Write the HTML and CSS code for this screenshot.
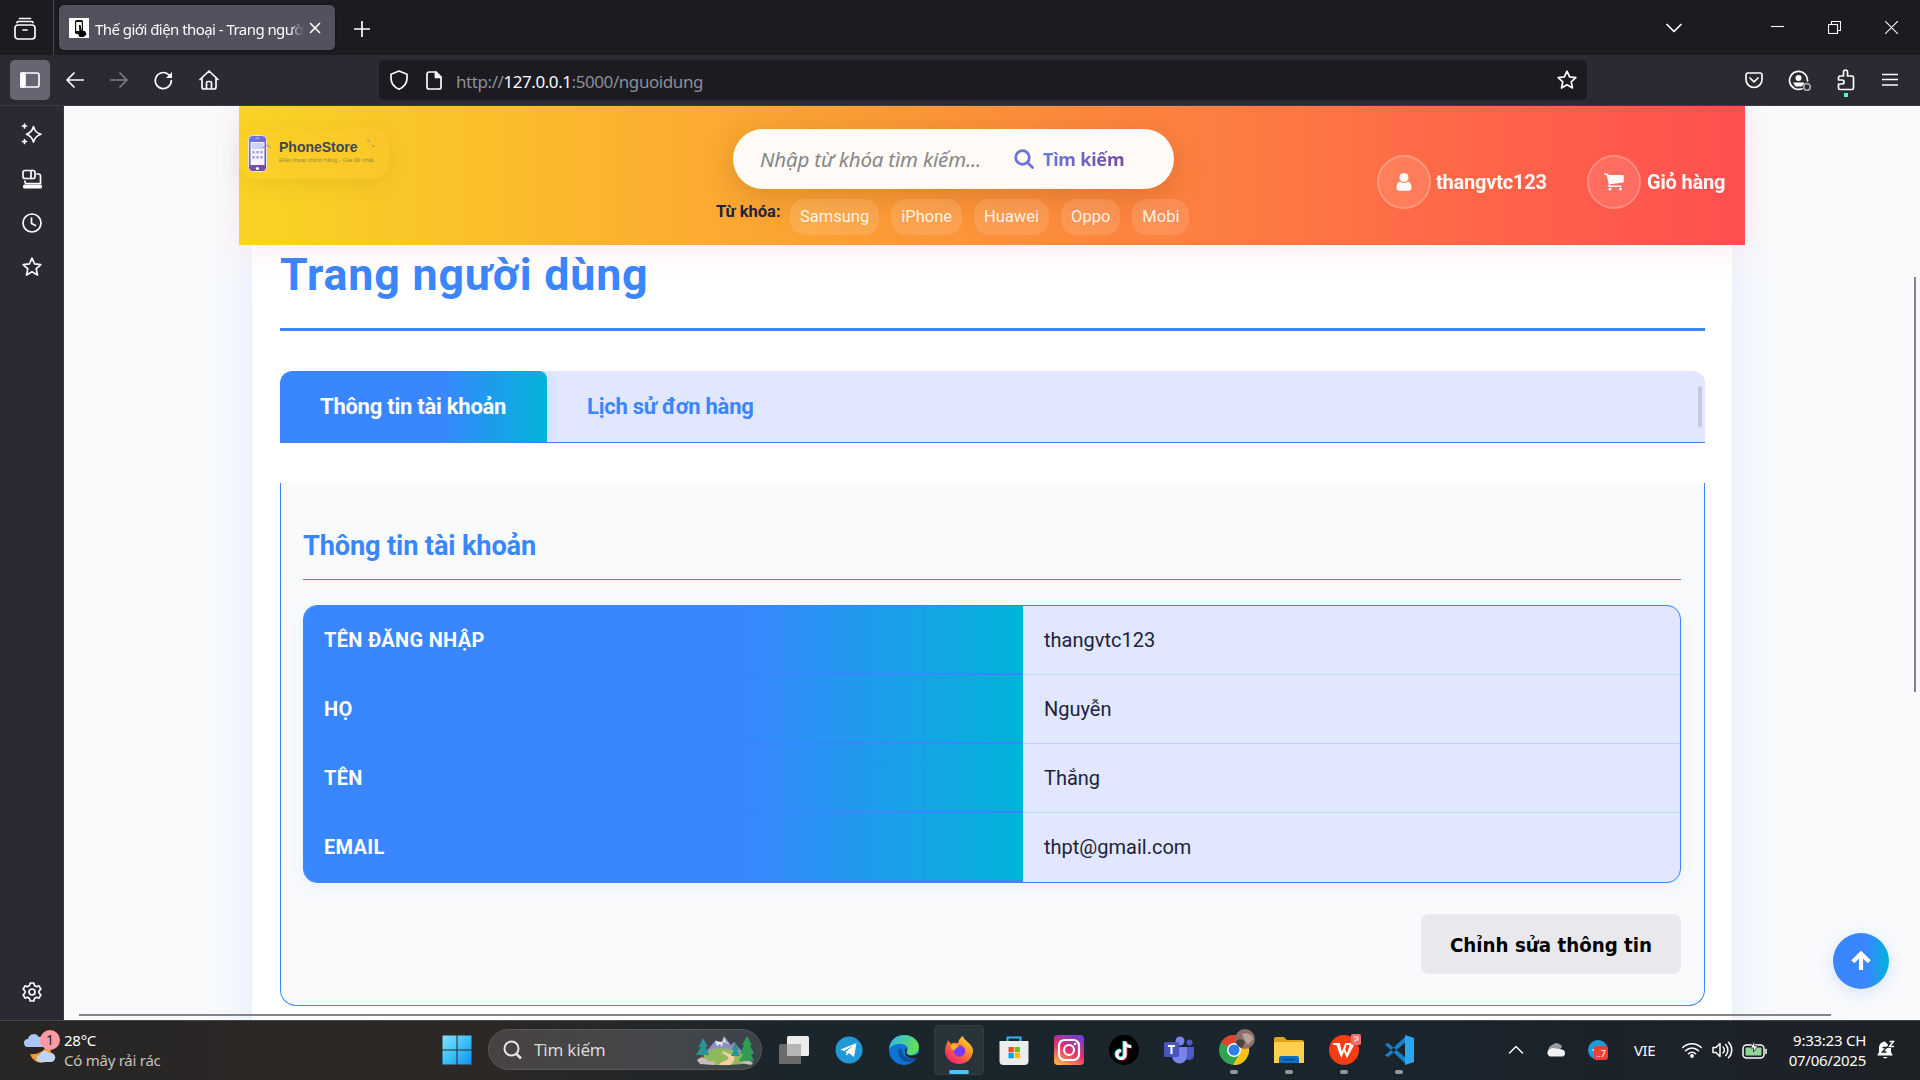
FILE: index.html
```html
<!DOCTYPE html>
<html lang="vi">
<head>
<meta charset="utf-8">
<title>Thế giới điện thoại - Trang người dùng</title>
<link rel="stylesheet" href="styles.css">
</head>
<body>
<div class="tabstrip">
  <div class="tab-overview"><svg class="ico" width="24" height="24" viewBox="0 0 24 24"><path d="M6.500 1.500h11M4 5.500a3 3 0 0 1 1-1h14a3 3 0 0 1 1 1"/><rect x="2" y="8" width="20" height="14" rx="3"/><path d="M10 13h4"/></svg></div>
  <div class="browser-tab">
    <svg width="20" height="20" viewBox="0 0 20 20"><rect width="20" height="20" fill="#fff"/><rect x="6" y="2" width="8" height="14" rx="1.500" fill="#111"/><rect x="7.200" y="4" width="5.600" height="9" fill="#fff"/><path d="M10 7l1.500 0 1 5 4 1.500 1 3-3 2.500h-4l-2-4 2 .5z" fill="#000"/></svg>
    <span class="tab-title">Thế giới điện thoại - Trang ngườ</span>
    <svg class="ico" width="12" height="12" viewBox="0 0 12 12"><path d="M1.500 1.500l9 9M10.500 1.500l-9 9"/></svg>
  </div>
  <svg class="ico new-tab" width="16" height="16" viewBox="0 0 16 16"><path d="M8 .5v15M.5 8h15"/></svg>
  <div class="window-controls">
    <svg class="ico" width="16" height="10" viewBox="0 0 16 10"><path d="M1 1.500l7 7 7-7"/></svg>
    <svg class="ico thin" width="13" height="12" viewBox="0 0 13 12"><path d="M0 4.500h13"/></svg>
    <svg class="ico thin" width="13" height="13" viewBox="0 0 13 13"><rect x=".5" y="3.500" width="9" height="9"/><path d="M3.500 3.500v-3h9v9h-3"/></svg>
    <svg class="ico thin" width="13" height="13" viewBox="0 0 13 13"><path d="M0 0l13 13M13 0L0 13"/></svg>
  </div>
</div>

<div class="toolbar">
  <div class="sidebar-toggle"><svg class="ico" width="20" height="16" viewBox="0 0 20 16"><rect x="1" y="1" width="18" height="14" rx="2"/><rect x="1" y="1" width="4" height="14" fill="#fbfbfe"/></svg></div>
  <div class="nav-buttons">
    <svg class="ico" width="18" height="16" viewBox="0 0 18 16"><path d="M17.500 8H1.500M8 1L1 8l7 7"/></svg>
    <svg class="ico dim" width="18" height="16" viewBox="0 0 18 16"><path d="M.5 8h16M10 1l7 7-7 7"/></svg>
    <svg class="ico" width="19" height="19" viewBox="0 0 19 19"><path d="M17.300 9.500a8 8 0 1 1-3-6.200l2.500 2.500"/><path d="M18 1v6h-6z" fill="#fbfbfe" stroke="none"/></svg>
    <svg class="ico" width="20" height="20" viewBox="0 0 20 20"><path d="M1 9.500L10 1l9 8.500M3 8v9a2 2 0 0 0 2 2h10a2 2 0 0 0 2-2V8M7.500 19v-6a1.500 1.500 0 0 1 1.500-1.500h2a1.500 1.500 0 0 1 1.500 1.500v6"/></svg>
  </div>
  <div class="address">
    <svg class="ico" width="20" height="20" viewBox="0 0 20 20"><path d="M10 1l8 3.300v4c0 5-3.500 9-8 10.900C5.500 17.300 2 13.300 2 8.300v-4z"/></svg>
    <svg class="ico" width="16" height="19" viewBox="0 0 16 19"><path d="M3 1h7l5 5v10a2 2 0 0 1-2 2H3a2 2 0 0 1-2-2V3a2 2 0 0 1 2-2z"/><path d="M9.500 1v5.500H15z" fill="#fbfbfe"/></svg>
    <span class="url">http://<b>127.0.0.1</b>:5000/nguoidung</span>
    <svg class="ico" width="20" height="20" viewBox="0 0 20 20"><path d="M10 1.200l2.600 5.700 6.200.7-4.600 4.200 1.300 6.200-5.500-3.200L4.500 18l1.300-6.200L1.200 7.600l6.200-.7z"/></svg>
  </div>
  <div class="toolbar-end">
    <svg class="ico" width="18" height="17" viewBox="0 0 18 17"><path d="M3 1h12a2 2 0 0 1 2 2v4.500a8 8 0 0 1-16 0V3a2 2 0 0 1 2-2zM5 6l4 3.800L13 6"/></svg>
    <svg class="ico" width="24" height="21" viewBox="0 0 24 21"><path d="M14 18.700A9 9 0 1 1 19.500 11" /><circle cx="10.500" cy="8" r="3" fill="#fbfbfe" stroke="none"/><path d="M5 12.500h11v1.500l-2.500 2.500h-6z" fill="#fbfbfe" stroke="none"/><circle cx="19" cy="17" r="3.300" stroke="#aaa9b0"/></svg>
    <svg class="ico" width="18" height="28" viewBox="0 0 18 28"><path d="M1.500 8.500a1.500 1.500 0 0 1 1.500-1.500h3.500V3a2 2 0 0 1 4 0v4H15a1.500 1.500 0 0 1 1.500 1.500V19a1.500 1.500 0 0 1-1.500 1.500H3A1.500 1.500 0 0 1 1.500 19v-4H5a2 2 0 0 0 0-4H1.500z"/><rect x="7" y="24" width="4" height="4" fill="#54ffbd" stroke="none"/></svg>
    <svg class="ico" width="16" height="14" viewBox="0 0 16 14"><path d="M.5 1.500h15M.5 6.500h15M.5 12h15"/></svg>
  </div>
</div>

<div class="middle">
  <div class="side">
    <svg class="ico" width="22" height="22" viewBox="0 0 22 22"><path d="M12.500 3.500c1.200 4.500 2.800 6.200 7.500 7.800-4.700 1.600-6.300 3.300-7.500 7.700-1.200-4.400-2.800-6.100-7-7.700 4.200-1.600 5.800-3.300 7-7.800zM3.500 1v4M1.500 3h4M3.500 16.500v4M1.500 18.500h4"/></svg>
    <svg class="ico" width="22" height="20" viewBox="0 0 22 20"><rect x="2" y="1.500" width="12" height="8" rx="2"/><path d="M10 2v7.500M16 5h1.500a2 2 0 0 1 2 2v7.500h-14a1.500 1.500 0 0 1-1.500-1.500v-1"/><rect x="2" y="15.500" width="19" height="4" rx="1.500" fill="#fbfbfe" stroke="none"/></svg>
    <svg class="ico" width="20" height="20" viewBox="0 0 20 20"><circle cx="10" cy="10" r="9"/><path d="M9.500 5v5.500l4 2"/></svg>
    <svg class="ico" width="20" height="20" viewBox="0 0 20 20"><path d="M10 1.200l2.600 5.700 6.200.7-4.600 4.200 1.300 6.200-5.500-3.200L4.500 18l1.300-6.200L1.200 7.600l6.200-.7z"/></svg>
    <svg class="ico gear" width="20" height="20" viewBox="0 0 20 20"><path d="M8.200 1h3.600l.7 2.600 1.900 1.100 2.600-.8 1.800 3.200L17 9v2l1.800 1.900-1.800 3.200-2.600-.8-1.900 1.100-.7 2.600H8.200l-.7-2.600-1.900-1.100-2.600.8-1.800-3.200L3 11V9L1.200 7.100 3 3.900l2.600.8 1.900-1.100z"/><circle cx="10" cy="10" r="3"/></svg>
  </div>

  <main class="viewport">
    <header class="site-header">
      <div class="logo">
        <svg width="26" height="40" viewBox="0 0 26 40"><defs><linearGradient id="ph" x1="0" y1="0" x2="0.300" y2="1"><stop offset="0" stop-color="#667eea"/><stop offset="1" stop-color="#764ba2"/></linearGradient></defs><rect x="1.500" y="1.500" width="18" height="36" rx="4" fill="url(#ph)" stroke="#ece5cf"/><rect x="3.500" y="8" width="14" height="23" fill="#f5f3fb"/><rect x="4.500" y="9" width="12" height="6" fill="#cdd2f5"/><g fill="#8f93d8"><rect x="5.500" y="17" width="2" height="2.500"/><rect x="9.500" y="17" width="2" height="2.500"/><rect x="13.500" y="17" width="2" height="2.500"/><rect x="5.500" y="22" width="2" height="2.500"/><rect x="9.500" y="22" width="2" height="2.500"/><rect x="13.500" y="22" width="2" height="2.500"/></g><circle cx="10.500" cy="34.500" r="1.600" fill="#fff"/><rect x="8.500" y="3.500" width="4" height="1.500" fill="#fff" opacity=".4"/><path d="M15 14l5-3 4 3" fill="none" stroke="#9a86a8"/></svg>
        <div class="logo-text"><strong>PhoneStore</strong><span>Điện thoại chính hãng - Giá tốt nhất</span></div>
        <svg width="12" height="12" viewBox="0 0 12 12"><circle cx="2.500" cy="4" r="1.400" fill="#c3ab58"/><circle cx="10" cy="1.500" r=".8" fill="#c3ab58"/><circle cx="7.500" cy="9" r="1" fill="#b98b50"/></svg>
      </div>
      <div class="search-area">
        <div class="search-box">
          <span class="placeholder">Nhập từ khóa tìm kiếm...</span>
          <svg width="20" height="20" viewBox="0 0 20 20" fill="none" stroke="#6a74dc" stroke-width="2.800"><circle cx="8.500" cy="8.500" r="6.800"/><path d="M13.500 13.500l5 5" stroke-linecap="round"/></svg>
          <span class="search-label">Tìm kiếm</span>
        </div>
        <div class="keywords"><strong>Từ khóa:</strong><span>Samsung</span><span>iPhone</span><span>Huawei</span><span>Oppo</span><span>Mobi</span></div>
      </div>
      <div class="account">
        <div class="round"><svg width="16" height="18" viewBox="0 0 16 18" fill="#fff"><circle cx="8" cy="4.500" r="4.500"/><path d="M4 8.500c2.500 2 5.500 2 8 0 2.500.6 3.500 3.500 3.500 6 0 2-1 3.300-2.800 3.300H3.300C1.500 17.800.5 16.500.5 14.500c0-2.500 1-5.400 3.500-6z"/></svg></div>
        <span class="acc-name">thangvtc123</span>
        <div class="round"><svg width="20" height="18" viewBox="0 0 20 18" fill="#fff"><path d="M0 .5h3.500c.7 0 .9.500 1 1.500H19c.5 0 .8.400.8.800v6c0 .4-.3.700-.7.800L6 11.200c.2.500.2.900 0 1.300h11.300v1.500H4.800c-.6 0-.8-.6-.6-1l.6-1.500L2.700 2H0z"/><circle cx="6" cy="16" r="1.600"/><circle cx="16.500" cy="16" r="1.600"/></svg></div>
        <span class="cart">Giỏ hàng</span>
      </div>
    </header>

    <section class="user-page">
      <h1>Trang người dùng</h1>
      <div class="tabs">
        <div class="tab active">Thông tin tài khoản</div>
        <div class="tab">Lịch sử đơn hàng</div>
        <i class="tabs-thumb"></i>
      </div>
      <div class="panel">
        <h2>Thông tin tài khoản</h2>
        <dl class="info">
          <dt>TÊN ĐĂNG NHẬP</dt><dd>thangvtc123</dd>
          <dt>HỌ</dt><dd>Nguyễn</dd>
          <dt>TÊN</dt><dd>Thắng</dd>
          <dt>EMAIL</dt><dd>thpt@gmail.com</dd>
        </dl>
        <button class="edit"><span>Chỉnh sửa thông tin</span></button>
      </div>
    </section>

    <div class="to-top"><svg width="20" height="20" viewBox="0 0 20 20" fill="none" stroke="#fff" stroke-width="4.200"><path d="M10 19V3M1.800 10.800L10 2.600l8.200 8.200"/></svg></div>
    <i class="scroll-v"></i>
    <i class="scroll-h"></i>
  </main>
</div>

<footer class="taskbar">
  <div class="weather">
    <svg width="36" height="36" viewBox="0 0 36 36"><path d="M6 24c6 1 14-2 16-8 6 2 7 10 2 14-5 5-15 3-18-6z" fill="#f79a2b"/><path d="M4 17a4 4 0 0 1 0-8 6 6 0 0 1 11-2 5 5 0 0 1 3 10z" fill="#a9c6f7"/><path d="M16 32a3.500 3.500 0 0 1 0-7 5 5 0 0 1 9-2 4.500 4.500 0 0 1 3 9z" fill="#bcd3fa"/><circle cx="26" cy="10" r="10" fill="#ff99a4"/><text x="26" y="15" text-anchor="middle" font-size="14" fill="#222">1</text></svg>
    <div><div>28°C</div><div class="muted">Có mây rải rác</div></div>
  </div>
  <div class="apps">
    <div class="app"><svg width="30" height="30" viewBox="0 0 30 30"><defs><linearGradient id="wn" x1="0" y1="0" x2="1" y2="1"><stop offset="0" stop-color="#84e0ff"/><stop offset=".5" stop-color="#3cc2fa"/><stop offset="1" stop-color="#0f8ff5"/></linearGradient></defs><path fill="url(#wn)" d="M.5.500h14v14H.5zM15.500.500h14v14h-14zM.5 15.500h14v14H.5zM15.500 15.500h14v14h-14z"/></svg></div>
    <div class="task-search">
      <svg width="19" height="20" viewBox="0 0 19 20" fill="none" stroke="#e6e6e6" stroke-width="2"><circle cx="8.500" cy="8.500" r="7"/><path d="M13.500 14l4.500 4.500" stroke-width="2.500"/></svg>
      <span>Tìm kiếm</span>
      <svg width="58" height="32" viewBox="0 0 58 32"><path d="M8 20L20 6l4 5 4-9 7 9 3-3 12 14z" fill="#8d8fc0"/><path d="M19 7l2 5 3-2 2 3 2-10 3 7 2-1" fill="#e8e6f5"/><path d="M3 27c6-12 20-16 36-10 8 3 14 8 15 10-2 5-48 6-51 0z" fill="#8fb95a"/><path d="M22 31c6-5 12-5 10-8s-8-3-5-6c5 3 14 4 11 9-1 3-3 4-4 5z" fill="#f6cf9f"/><path d="M7 4l5 9H9.500l4 8H0l5-8H2.500zM39 8l4 8h-2l3 6h-9l3-6h-2z" fill="#2a9396"/><path d="M51 2l5 9h-2l4 9h-3l3 7H43l4-7h-3l4-9h-2z" fill="#2e9c53"/><path d="M7 21v5M51 26v4" stroke="#8a5436" stroke-width="2"/><path d="M1 26c4-4 8-3 11 1l8 1-2 3-14-1zM45 29c4-3 9-3 12 0l-2 2z" fill="#cbb9b9"/></svg>
    </div>
    <div class="app"><svg width="30" height="30" viewBox="0 0 30 30"><rect x="0" y="9" width="22" height="20" rx="1.500" fill="#6b6b6b"/><rect x="8" y="1" width="22" height="20" rx="1.500" fill="#ececec"/><path d="M8 9h14v12H8z" fill="#b5b5b5"/></svg></div>
    <div class="app"><svg width="28" height="28" viewBox="0 0 28 28"><circle cx="14" cy="14" r="13.500" fill="#2199d8"/><path d="M5.500 13.500L21.500 7l-2.500 14-5-4-2.500 2.500-.5-4 7-6-9 5.500z" fill="#fff"/></svg></div>
    <div class="app"><svg width="30" height="30" viewBox="0 0 30 30"><defs><linearGradient id="ed" x1="0" y1="0" x2="1" y2=".3"><stop offset="0" stop-color="#2fb5f0"/><stop offset="1" stop-color="#5fe05a"/></linearGradient></defs><circle cx="15" cy="15" r="15" fill="#0f74d1"/><path d="M0 14C1 5 7 0 15 0c9 0 15 6 15 12 0 5-4 8-8 8-3 0-5-1-4-3 2-4 0-8-6-8C6 9 2 11 0 14z" fill="url(#ed)"/><path d="M10 13c-3 8 4 16 14 14l4-4c-7 3-15-1-15-8z" fill="#134fa0"/><path d="M17 13c2 2-1 4 1 6 3 3 7 2 12-1l1 4-3 1c-6 2-13-1-12-8z" fill="#1a252c"/></svg></div>
    <div class="app running current"><svg width="30" height="30" viewBox="0 0 30 30"><defs><linearGradient id="fx" x1="1" y1="0" x2="0.200" y2="1"><stop offset="0" stop-color="#fff24a"/><stop offset=".45" stop-color="#ff8a1e"/><stop offset="1" stop-color="#f0157e"/></linearGradient></defs><path d="M1 16c0-5 2-7 3-11l3 4c2-2 5-1 7-1 1-4 3-6 5-7 0 4 9 7 10 14 0 8-6 14-14 14S1 23 1 16z" fill="url(#fx)"/><circle cx="15.500" cy="16" r="5.800" fill="#7a3bf0"/><path d="M7 10c4-2 7 0 8 2-2 0-4 1-4 3-3 0-5-2-4-5z" fill="#ffb52a"/></svg></div>
    <div class="app"><svg width="30" height="30" viewBox="0 0 30 30"><path d="M8.500 7V2.500h13V7" fill="none" stroke="#36b6ee" stroke-width="2"/><path d="M.5 6h29v20a4 4 0 0 1-4 4h-21a4 4 0 0 1-4-4z" fill="#ededed"/><path d="M9.500 12h5.300v5.300H9.500z" fill="#f25022"/><path d="M15.600 12h5.300v5.300h-5.300z" fill="#7fba00"/><path d="M9.500 18h5.300v5.300H9.500z" fill="#00a4ef"/><path d="M15.600 18h5.300v5.300h-5.300z" fill="#ffb900"/></svg></div>
    <div class="app"><svg width="30" height="30" viewBox="0 0 30 30"><defs><linearGradient id="ig" x1="0.700" y1="0" x2="0.200" y2="1"><stop offset="0" stop-color="#7a3bd0"/><stop offset=".5" stop-color="#e1306c"/><stop offset="1" stop-color="#fdb04a"/></linearGradient></defs><rect width="30" height="30" rx="4" fill="url(#ig)"/><g fill="none" stroke="#fff" stroke-width="2.200"><rect x="5" y="5" width="20" height="20" rx="5.500"/><circle cx="15" cy="15" r="5"/></g><circle cx="21" cy="9" r="1.300" fill="#fff"/></svg></div>
    <div class="app"><svg width="30" height="30" viewBox="0 0 30 30"><circle cx="15" cy="15" r="15" fill="#000"/><g fill="none" stroke-width="3"><path d="M15 6v13a4 4 0 1 1-4-4M15 6c0 3 2 5 6 5" stroke="#25f4ee"/><path d="M17 7v13a4 4 0 1 1-4-4M17 7c0 3 2 5 6 5" stroke="#fe2c55"/><path d="M16 6.500v13a4 4 0 1 1-4-4M16 6.500c0 3 2 5 6 5" stroke="#fff"/></g></svg></div>
    <div class="app"><svg width="30" height="30" viewBox="0 0 30 30"><circle cx="16" cy="6" r="4.500" fill="#7b83eb"/><circle cx="25.500" cy="7.500" r="3" fill="#5059c9"/><path d="M20 12h10v8a5 5 0 0 1-8 4z" fill="#5059c9"/><path d="M8 12h15v9a7.500 7.500 0 0 1-15 0z" fill="#7b83eb"/><rect x="0" y="7" width="15" height="15" rx="1.500" fill="#4b53bc"/><path d="M4 11h7M7.500 11v8" stroke="#fff" stroke-width="2"/></svg></div>
    <div class="app running"><svg class="chrome" width="36" height="36" viewBox="0 0 36 36"><g transform="translate(0 6)"><circle cx="15" cy="15" r="15" fill="#32a350"/><path d="M2 7.500A15 15 0 0 1 28 7.500H15l-6 4z" fill="#e8402f"/><path d="M28 7.500A15 15 0 0 1 14 30l7-12V8z" fill="#fbc116"/><circle cx="15" cy="15" r="7" fill="#fff"/><circle cx="15" cy="15" r="5.500" fill="#2f7de9"/></g><circle cx="26" cy="10" r="10" fill="#8b7069"/><path d="M17 12c4-3 7-2 9 1l-3 6c-4-1-6-4-6-7z" fill="#4c4341"/><path d="M23 5c5-2 10 0 11 5l-5 6-3-4z" fill="#b9a49b"/></svg></div>
    <div class="app running"><svg width="30" height="28" viewBox="0 0 30 28"><path d="M0 3a2 2 0 0 1 2-2h8l3 3h15a2 2 0 0 1 2 2v21H0z" fill="#dfa516"/><path d="M0 6h30v21H0z" fill="#fdd04e"/><path d="M5 27v-5a2 2 0 0 1 2-2h16a2 2 0 0 1 2 2v5z" fill="#0f6fc0"/><path d="M9 23.500h12" stroke="#0a4a8a" stroke-width="1.500"/></svg></div>
    <div class="app running"><svg class="wps" width="32" height="32" viewBox="0 0 32 32"><circle cx="15" cy="17" r="15" fill="#fb3b12"/><path d="M4 11h6l2.500 11L17 11h5l-3.500 11M8 11l4.500 12M15 16l3 7 6-11" fill="none" stroke="#fff" stroke-width="2"/><rect x="22" y="1" width="10" height="11" rx="1.500" fill="#ee6a6c"/><path d="M24.500 4h4.500v3h-3v2.500" fill="none" stroke="#fff"/></svg></div>
    <div class="app running"><svg width="30" height="30" viewBox="0 0 30 30"><path d="M1 9.500L4 8l18 15v6zM1 20.500L4 22 22 7V1z" fill="#1580cc"/><path d="M21 0l9 3v24l-9 3z" fill="#2aa7f3"/></svg></div>
  </div>
  <div class="tray">
    <svg class="ico" width="16" height="9" viewBox="0 0 16 9"><path d="M1.500 8L8 1.500 14.500 8"/></svg>
    <svg width="20" height="14" viewBox="0 0 20 14"><path d="M3 9A5 5 0 0 1 6 2a6 6 0 0 1 10 2l-6 6z" fill="#9b9b9b"/><path d="M4 13.500a4 4 0 0 1-1-7 7 7 0 0 1 7-1l6 1a3.700 3.700 0 0 1 1 7z" fill="#f2f2f2"/></svg>
    <svg width="20" height="20" viewBox="0 0 20 20"><circle cx="10" cy="10" r="10" fill="#2298d6"/><path d="M3.500 10l4-1.500v3z" fill="#fff"/><rect x="6" y="6" width="14" height="14" rx="3" fill="#f23c34"/><text x="13" y="17" text-anchor="middle" font-size="9" fill="#fff">..7</text></svg>
    <span class="lang">VIE</span>
    <svg class="ico wifi" width="20" height="16" viewBox="0 0 20 16"><path d="M.8 5.500a13 13 0 0 1 18.400 0M3.500 8.800a9 9 0 0 1 13 0M6.400 11.800a5 5 0 0 1 7.200 0"/><circle cx="10" cy="14" r="1.200" fill="#fff"/></svg>
    <svg class="ico" width="21" height="18" viewBox="0 0 21 18"><path d="M1 6.500h3l4-4v13l-4-4H1zM11 6a4 4 0 0 1 0 6M13.700 3.500a8 8 0 0 1 0 11M16.500 1.200a11 11 0 0 1 0 15.600"/></svg>
    <svg class="ico" width="26" height="18" viewBox="0 0 26 18"><rect x="1" y="4" width="21" height="13" rx="3.500"/><rect x="3.500" y="6.500" width="16" height="8" rx="1" fill="#8fd694" stroke="none"/><path d="M24 8.500v4"/><path d="M12.500 0L8.500 7h3v4l4.500-6h-3z" fill="#fff" stroke="#1d2024" stroke-width=".8"/></svg>
    <div class="clock"><div>9:33:23 CH</div><div>07/06/2025</div></div>
    <svg width="18" height="20" viewBox="0 0 18 20"><path d="M8 1.500a6 6 0 0 0-6 6V12l-1.800 3.500h15.600L14 12V8z" fill="#fff"/><path d="M6 17a2.500 2.500 0 0 0 4.500 0z" fill="#fff"/><path d="M11.500 1h5l-4.500 5.500H17" fill="none" stroke="#1d2024" stroke-width="3"/><path d="M12.500 1.500h4l-4 5h4.500" fill="none" stroke="#fff" stroke-width="1.400"/><path d="M5.500 7.500h4l-4 4.500h4" fill="none" stroke="#1d2024" stroke-width="1.400"/></svg>
  </div>
</footer>
</body>
</html>
```
FILE: styles.css
```css
* { box-sizing: border-box; }
body {
  margin: 0; width: 1920px; height: 1080px; overflow: hidden;
  display: grid; grid-template-rows: 55px 51px 914px 60px;
  font-family: Roboto, "Noto Sans", sans-serif;
}
svg { display: block; flex: none; }
.ico { fill: none; stroke: #fbfbfe; stroke-width: 1.7; stroke-linecap: round; stroke-linejoin: round; }
.ico.thin { stroke-width: 1.1; stroke-linecap: butt; stroke-linejoin: miter; }
.dim { opacity: .4; }

/* browser chrome */
.tabstrip { background: #1c1b22; display: flex; align-items: center; color: #fbfbfe; }
.tab-overview { width: 54px; height: 55px; padding: 17px 0 0 13px; border-right: 1px solid #4a4952; }
.browser-tab {
  margin-left: 5px; width: 276px; height: 45px; padding: 0 14px 0 10px; border-radius: 5px; background: #53515e;
  display: flex; align-items: center; box-shadow: 0 0 3px #0008;
}
.tab-title {
  margin: 2px 3px 0 6px; width: 211px; white-space: nowrap; font: 15px/24px "Noto Sans", sans-serif; letter-spacing: -.55px;
  mask-image: linear-gradient(90deg, #000 92%, transparent 99%);
}
.new-tab { margin: 2px 0 0 19px; width: 16px; }
.window-controls { margin-left: auto; display: flex; align-items: center; padding-right: 22px; }
.window-controls svg + svg { margin-left: 44px; }
.window-controls svg:nth-child(2) { margin-left: 89px; }
.toolbar { background: #2b2a33; border-bottom: 1px solid #3c3b44; display: flex; align-items: center; padding-left: 10px; }
.sidebar-toggle { width: 40px; height: 40px; border-radius: 5px; background: #676571; display: grid; place-items: center; }
.nav-buttons { display: flex; align-items: center; gap: 26px; margin-left: 16px; width: 313px; }
.address { width: 1208px; height: 40px; border-radius: 5px; background: #1c1b22; display: flex; align-items: center; padding: 0 10px; }
.address svg:nth-child(2) { margin-left: 17px; }
.url { margin: 3px 0 0 14px; flex: 1; color: #8f8e96; font: 17px/24px "Noto Sans", sans-serif; letter-spacing: -.43px; }
.url b { font-weight: 400; color: #fbfbfe; }
.toolbar-end { margin-left: auto; display: flex; align-items: center; gap: 25px; padding-right: 22px; }
.toolbar-end svg:nth-child(3) { margin-top: 6px; margin-right: 2px; }

.middle { display: grid; grid-template-columns: 64px 1856px; min-height: 0; }
.side { background: #2b2a33; border-right: 1px solid #3c3b44; display: flex; flex-direction: column; align-items: center; padding: 17px 0 18px; gap: 24px; }
.gear { margin-top: auto; }

/* page */
.viewport { position: relative; overflow: hidden; background: #f8fafc; display: flex; flex-direction: column; }
.site-header {
  position: relative; z-index: 2; flex: none; width: 1506px; height: 139px; margin-left: 175px; display: flex;
  background: linear-gradient(90deg, #f9d423, #ff4e50); box-shadow: 0 4px 30px rgba(255, 78, 80, .12);
}
.logo {
  width: 150px; height: 50px; margin-top: 23px; padding: 5px 0 0 8px; border-radius: 15px; display: flex;
  background: rgba(255, 200, 50, .2); box-shadow: 0 6px 20px rgba(120, 90, 0, .1);
}
.logo-text { margin: 6px 0 0 6px; width: 78px; color: #3d4852; white-space: nowrap; font-family: "Liberation Sans", sans-serif; }
.logo-text strong { display: block; font-size: 14px; line-height: 15px; }
.logo-text span { display: block; font-size: 6px; line-height: 10px; color: #9a8a44; }
.logo > svg:last-child { margin: 3px 0 0 9px; }
.search-area { margin-left: 327px; width: 480px; }
.search-box {
  width: 441px; height: 60px; margin: 23px 0 0 17px; padding-left: 27px; border-radius: 30px; background: #fffaf6;
  display: flex; align-items: center; box-shadow: 0 8px 30px rgba(120, 60, 0, .22);
}
.placeholder { width: 254px; font: italic 20.500px/30px "Noto Sans", sans-serif; letter-spacing: -.18px; color: #86868a; white-space: nowrap; }
.search-label {
  margin-left: 9px; font: bold 18px/28px "Noto Sans", sans-serif; white-space: nowrap; letter-spacing: -.2px;
  background: linear-gradient(90deg, #667bdc, #764ba2); background-clip: text; color: transparent;
}
.keywords { display: flex; margin-top: 10px; gap: 12px; font-size: 16.500px; line-height: 36px; color: rgba(255, 255, 255, .88); white-space: nowrap; }
.keywords strong { width: 62px; line-height: 26px; color: #22223b; }
.keywords span { height: 36px; padding: 0 10px; border-radius: 15px; background: rgba(255, 255, 255, .12); }
.account { margin-left: auto; display: flex; align-items: center; align-self: flex-start; margin-top: 49px; padding-right: 18px; color: #fff; opacity: .96; font-size: 20px; letter-spacing: -.2px; font-weight: 700; white-space: nowrap; }
.round { width: 54px; height: 54px; flex: none; border-radius: 50%; border: 2px solid rgba(255, 255, 255, .22); background: rgba(255, 255, 255, .12); display: grid; place-items: center; }
.acc-name { margin-left: 5px; width: 151px; }
.cart { margin-left: 6px; width: 80px; }

.user-page { flex: none; width: 1480px; height: 800px; margin-left: 188px; padding: 0 27px 0 28px; background: #fff; box-shadow: 0 8px 40px rgba(58, 134, 255, .13); }
h1 { margin: 0; height: 86px; padding-top: 3px; border-bottom: 3px solid #3a86ff; font-size: 44.800px; line-height: 54px; font-weight: 700; letter-spacing: .8px; color: #3a86ff; }
.tabs { margin-top: 40px; height: 72px; display: flex; background: #e0e7ff; border-bottom: 1px solid #3a86ff; border-radius: 12px 12px 0 0; overflow: hidden; }
.tab { padding: 0 40px; font-size: 22px; line-height: 71px; font-weight: 700; letter-spacing: -.25px; color: #3a86ff; white-space: nowrap; }
.tab.active { width: 267px; color: #fff; background: linear-gradient(90deg, #3a86ff 60%, #00b4d8); border-radius: 12px 8px 0 0; box-shadow: 0 2px 12px rgba(58, 134, 255, .15); }
.tabs-thumb { margin: 15px 3px 0 auto; width: 4px; height: 41px; border-radius: 2px; background: #c3c9de; }
.panel { margin-top: 40px; height: 523px; padding: 40px 23px 0 22px; background: #f8fafc; border: 1px solid #3a86ff; border-top: 0; border-radius: 0 0 16px 16px; display: flex; flex-direction: column; }
h2 { margin: 0; height: 57px; border-bottom: 1px solid #3a86ff; font-size: 27.200px; line-height: 46px; font-weight: 700; letter-spacing: -.15px; color: #3a86ff; }
.info {
  margin: 25px 0 0; height: 278px; display: grid; grid-template-columns: 719px 1fr; grid-template-rows: repeat(4, 69px);
  border: 1px solid #3a86ff; border-radius: 14px; overflow: hidden; background: #e0e7ff; box-shadow: 0 4px 16px rgba(58, 134, 255, .08);
  font-size: 20px; line-height: 68px; color: #22223b;
}
.info dt { padding-left: 20px; color: #fff; font-weight: 700; letter-spacing: .3px; background: linear-gradient(90deg, #3a86ff 60%, #00b4d8); border-bottom: 2px solid #3a86ff; }
.info dd { margin: 0; padding-left: 21px; border-bottom: 1px solid #b6dcfb; }
.info dd:last-child { border: 0; }
.edit { align-self: flex-end; margin-top: 31px; width: 260px; height: 60px; padding: 2px 0 0; border: 0; border-radius: 8px; background: #e9e8ed; color: #000; font: bold 20.300px/58px "DejaVu Sans Condensed", "DejaVu Sans", sans-serif; white-space: nowrap; }

.to-top {
  position: absolute; z-index: 3; left: 1769px; top: 827px; width: 56px; height: 56px; border-radius: 50%; display: grid; place-items: center;
  background: linear-gradient(90deg, #3a86ff 60%, #00b4d8); box-shadow: 0 4px 16px rgba(58, 134, 255, .18);
}
.scroll-v, .scroll-h { position: absolute; z-index: 3; background: #858387; }
.scroll-v { left: 1850px; top: 171px; width: 2px; height: 415px; }
.scroll-h { left: 15px; top: 908px; width: 1752px; height: 2px; }

/* taskbar */
.taskbar {
  display: flex; align-items: center; border-top: 1px solid #45494b; color: #fff; font-family: "Noto Sans", sans-serif;
  background: linear-gradient(90deg, #272624, #2c2825 25%, #1a252c 42%, #1a242c 75%, #1d2126); padding-bottom: 2px;
}
.weather { width: 432px; padding-left: 24px; display: flex; gap: 4px; font-size: 15px; line-height: 20px; letter-spacing: -.25px; }
.muted { color: #c4c3c2; }
.apps { display: flex; align-items: center; gap: 5px; }
.app { position: relative; width: 50px; height: 50px; border-radius: 5px; display: grid; place-items: center; }
.app.running::after { content: ""; position: absolute; left: 21px; bottom: 1px; width: 8px; height: 4px; border-radius: 2px; background: #95999b; }
.app.current { background: #29343a; box-shadow: inset 0 0 0 1px #333d43; }
.app.current::after { left: 15px; width: 20px; background: #4cc2ff; }
.chrome { margin: -6px -6px 0 0; }
.wps { margin: -2px -2px 0 0; }
.task-search { width: 274px; height: 41px; border: 1px solid #5b5957; border-radius: 21px; background: linear-gradient(90deg, #474341, #45474a 60%, #3b444b); display: flex; align-items: center; padding-left: 14px; color: #d8d8d8; font-size: 17px; letter-spacing: -.2px; margin: 0 2px 0 1px; }
.task-search span { margin-left: 12px; width: 162px; }
.tray { margin-left: auto; padding-right: 25px; display: flex; align-items: center; font-size: 15px; }
.tray .ico { stroke-width: 1.5; }
.tray > svg:nth-child(2), .tray > svg:nth-child(3) { margin-left: 22px; }
.lang { margin-left: 26px; width: 48px; letter-spacing: -.4px; }
.wifi { margin-right: 10px; }
.tray > svg:nth-child(7) { margin-left: 9px; }
.clock { width: 96px; margin: 0 11px 0 2px; text-align: right; line-height: 20px; font-size: 15px; letter-spacing: -.25px; white-space: nowrap; }
```
